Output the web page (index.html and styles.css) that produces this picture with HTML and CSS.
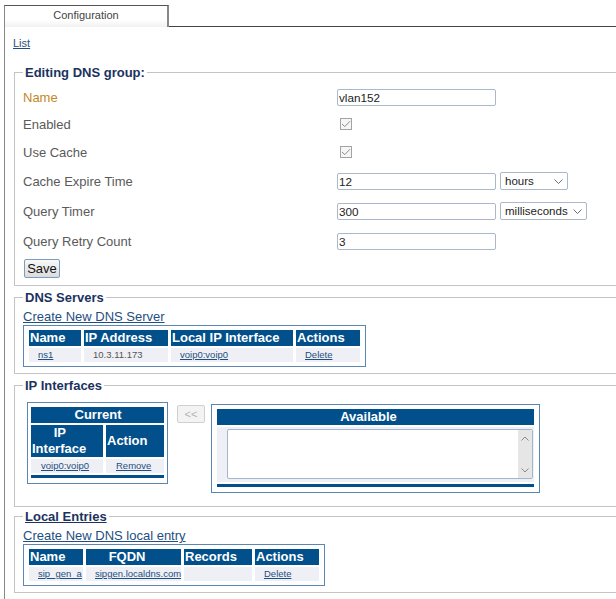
FILE: index.html
```html
<!DOCTYPE html>
<html lang="en">
  <head>
    <meta charset="UTF-8" />
    <meta name="viewport" content="width=device-width, initial-scale=1.0" />
    <title>DNS Group</title>
    <link rel="stylesheet" href="styles.css">
  </head>
  <body>
  <div class="tabs">
    <div class="tab">Configuration</div>
    <div class="tab-rest"></div>
  </div>
  <div class="panel">
    <a href="#" class="list-link">List</a>

    <fieldset class="group group-edit">
      <legend>Editing DNS group:</legend>
      <div class="row row-name">
        <label class="label required">Name</label>
        <input class="text" type="text" value="vlan152">
      </div>
      <div class="row row-check">
        <label class="label">Enabled</label>
        <span class="check"><svg width="10" height="8" viewBox="0 0 10 8"><polyline points="1,4 3.8,6.6 9,1.2" fill="none" stroke="#8c8c8c" stroke-width="1"/></svg></span>
      </div>
      <div class="row row-check">
        <label class="label">Use Cache</label>
        <span class="check"><svg width="10" height="8" viewBox="0 0 10 8"><polyline points="1,4 3.8,6.6 9,1.2" fill="none" stroke="#8c8c8c" stroke-width="1"/></svg></span>
      </div>
      <div class="row">
        <label class="label">Cache Expire Time</label>
        <input class="text" type="text" value="12">
        <span class="select">
          <select class="sel-hours"><option>hours</option></select>
          <svg class="chev" width="9" height="5" viewBox="0 0 9 5"><polyline points="0.5,0.5 4.5,4.5 8.5,0.5" fill="none" stroke="#6f6f6f" stroke-width="1"/></svg>
        </span>
      </div>
      <div class="row">
        <label class="label">Query Timer</label>
        <input class="text" type="text" value="300">
        <span class="select">
          <select class="sel-ms"><option>milliseconds</option></select>
          <svg class="chev" width="9" height="5" viewBox="0 0 9 5"><polyline points="0.5,0.5 4.5,4.5 8.5,0.5" fill="none" stroke="#6f6f6f" stroke-width="1"/></svg>
        </span>
      </div>
      <div class="row">
        <label class="label">Query Retry Count</label>
        <input class="text" type="text" value="3">
      </div>
      <button class="save">Save</button>
    </fieldset>

    <fieldset class="group group-servers">
      <legend>DNS Servers</legend>
      <a href="#" class="create">Create New DNS Server</a>
      <table class="grid servers">
        <colgroup>
          <col class="c52"><col class="c84"><col class="c122"><col class="c64">
        </colgroup>
        <tr>
          <th>Name</th>
          <th>IP Address</th>
          <th>Local IP Interface</th>
          <th>Actions</th>
        </tr>
        <tr>
          <td><a href="#">ns1</a></td>
          <td>10.3.11.173</td>
          <td><a href="#">voip0:voip0</a></td>
          <td><a href="#">Delete</a></td>
        </tr>
      </table>
    </fieldset>

    <fieldset class="group group-ifaces">
      <legend>IP Interfaces</legend>
      <div class="ifaces">
        <table class="grid current">
          <colgroup>
            <col class="c72"><col class="c58">
          </colgroup>
          <tr><th colspan="2" class="center">Current</th></tr>
          <tr>
            <th class="two-line">&nbsp;&nbsp;&nbsp;&nbsp;&nbsp;&nbsp;IP Interface</th>
            <th>Action</th>
          </tr>
          <tr>
            <td><a href="#">voip0:voip0</a></td>
            <td><a href="#">Remove</a></td>
          </tr>
          <tr class="bar"><td colspan="2"></td></tr>
        </table>
        <button class="move" disabled>&lt;&lt;</button>
        <table class="grid available">
          <tr><th class="center">Available</th></tr>
          <tr>
            <td class="list-cell">
              <div class="listbox">
                <div class="list-area"></div>
                <div class="scroll">
                  <svg width="8" height="5" viewBox="0 0 8 5"><polyline points="0.5,4.5 4,1 7.5,4.5" fill="none" stroke="#8a8a8a" stroke-width="1"/></svg>
                  <svg width="8" height="5" viewBox="0 0 8 5"><polyline points="0.5,0.5 4,4 7.5,0.5" fill="none" stroke="#8a8a8a" stroke-width="1"/></svg>
                </div>
              </div>
            </td>
          </tr>
          <tr class="bar"><td></td></tr>
        </table>
      </div>
    </fieldset>

    <fieldset class="group group-local">
      <legend><a href="#">Local Entries</a></legend>
      <a href="#" class="create">Create New DNS local entry</a>
      <table class="grid local">
        <colgroup>
          <col class="c54"><col class="c95"><col class="c68"><col class="c64">
        </colgroup>
        <tr>
          <th>Name</th>
          <th>&nbsp;&nbsp;&nbsp;&nbsp;&nbsp;&nbsp;FQDN</th>
          <th>Records</th>
          <th>Actions</th>
        </tr>
        <tr>
          <td><a href="#">sip_gen_a</a></td>
          <td><a href="#">sipgen.localdns.com</a></td>
          <td></td>
          <td><a href="#">Delete</a></td>
        </tr>
      </table>
    </fieldset>
  </div>
  </body>
</html>
```

FILE: styles.css
```css
html, body {
  overflow: hidden;
}
body {
  margin: 0;
  padding: 5px 0 0 4px;
  font-family: "Liberation Sans", Arial, sans-serif;
  color: #555;
  background: #fff;
}
a {
  color: #1f4f80;
}

/* tab strip */
.tabs {
  display: flex;
}
.tab {
  width: 162px;
  height: 21px;
  line-height: 19px;
  border-top: 1px solid #555;
  border-left: 1px solid #888;
  border-right: 2px solid #888;
  text-align: center;
  font-size: 11px;
  color: #444;
  background: linear-gradient(#fff 65%, #f1f1f1);
}
.tab-rest {
  flex: 1;
  height: 21px;
  border-bottom: 1px solid #444;
}
.panel {
  box-sizing: border-box;
  min-height: 572px;
  overflow-x: hidden;
  border-left: 1px solid #888;
  padding: 10px 0 0 8px;
}
.list-link {
  display: block;
  width: fit-content;
  font-size: 11px;
  line-height: 13px;
  margin-bottom: 15px;
}

/* fieldsets */
.group {
  width: 640px;
  margin: 4px 0 0 1px;
  padding: 4px 8px 7px;
  border: 1px solid #c4c4c4;
}
.group legend {
  padding: 0 2px;
  font-size: 13px;
  font-weight: bold;
  line-height: 15px;
  color: #1b3260;
}
.group legend a {
  color: #1b3260;
}
.group-servers {
  padding-bottom: 6px;
}
.group-ifaces {
  padding-bottom: 13px;
}
.group-local {
  margin-top: 2px;
  padding-bottom: 6px;
}

/* form rows */
.row {
  display: flex;
  align-items: center;
  height: 30px;
}
.row-name {
  height: 26px;
}
.row-check {
  height: 28px;
}
.label {
  width: 314px;
  font-size: 13px;
  color: #5a5a5a;
}
.required {
  color: #c4871f;
}
.text {
  box-sizing: border-box;
  width: 159px;
  height: 17px;
  margin: 0;
  padding: 0 1px;
  border: 1px solid #a9b8cb;
  border-radius: 2px;
  font-family: "Liberation Sans", Arial, sans-serif;
  font-size: 11.7px;
  color: #222;
}
.check {
  box-sizing: border-box;
  width: 12px;
  height: 12px;
  margin-left: 3px;
  border: 1px solid #a3a3a3;
  background: #f6f6f6;
  display: flex;
  align-items: center;
  justify-content: center;
}
.select {
  position: relative;
  display: inline-flex;
  margin-left: 4px;
}
.select select {
  -webkit-appearance: none;
  appearance: none;
  box-sizing: border-box;
  height: 18px;
  margin: 0;
  padding: 0 0 0 4px;
  border: 1px solid #a9b8cb;
  border-radius: 2px;
  background: #fff;
  font-family: "Liberation Sans", Arial, sans-serif;
  font-size: 11.5px;
  color: #222;
}
.sel-hours {
  width: 68px;
}
.sel-ms {
  width: 87px;
}
.chev {
  position: absolute;
  right: 5px;
  top: 7px;
}
.save {
  display: block;
  width: 36px;
  height: 19px;
  margin-top: 3px;
  margin-left: 1px;
  padding: 0;
  border: 1px solid #7b9cc2;
  border-radius: 2px;
  background: linear-gradient(#f8f8f8, #dcdcdc);
  font-family: "Liberation Sans", Arial, sans-serif;
  font-size: 13px;
  color: #111;
}

/* tables */
.create {
  display: block;
  width: fit-content;
  font-size: 13px;
  line-height: 15px;
}
.grid {
  box-sizing: border-box;
  table-layout: fixed;
  border: 1px solid #5b87b2;
  border-spacing: 3px 2px;
  padding: 2px;
  margin-top: 1px;
}
.grid th {
  background: #02508b;
  color: #fff;
  font-size: 13px;
  font-weight: bold;
  line-height: 16px;
  text-align: left;
  padding: 0 0 0 1px;
}
.grid th.center {
  text-align: center;
}
.grid td {
  background: #eef0f5;
  font-size: 9.5px;
  line-height: 12px;
  padding: 1px 0 1px 9px;
  color: #555;
  white-space: nowrap;
}
.grid tr.bar td {
  height: 3px;
  padding: 0;
  font-size: 0;
  line-height: 0;
  background: #02508b;
}
.servers {
  width: 343px;
}
.local {
  width: 302px;
}
.c52 { width: 52px; }
.c84 { width: 84px; }
.c122 { width: 122px; }
.c64 { width: 64px; }
.c54 { width: 54px; }
.c95 { width: 95px; }
.c68 { width: 68px; }
.c72 { width: 72px; }
.c58 { width: 58px; }

/* ip interfaces */
.ifaces {
  display: flex;
  align-items: flex-start;
  padding: 5px 0 0 4px;
}
.current {
  width: 141px;
  margin-top: 0;
  padding: 2px 0 3px;
}
.current td {
  padding-left: 10px;
}
.two-line {
  line-height: 16px;
}
.move {
  width: 28px;
  height: 18px;
  margin: 3px 6px 0 9px;
  padding: 0;
  border: 1px solid #cfcfcf;
  border-radius: 2px;
  background: #f3f3f3;
  color: #b3b3b3;
  font-family: "Liberation Sans", Arial, sans-serif;
  font-size: 11px;
}
.available {
  width: 329px;
  margin-top: 2px;
  border-spacing: 2px;
  padding: 2px 3px 3px;
}
.available th.center {
  padding-right: 15px;
}
.available td.list-cell {
  padding: 2px 1px 3px 10px;
}
.listbox {
  box-sizing: border-box;
  display: flex;
  width: 306px;
  height: 50px;
  border: 1px solid #a3b6cd;
  border-radius: 2px;
  background: #fff;
}
.list-area {
  flex: 1;
}
.scroll {
  width: 14px;
  background: #e6e6e6;
  display: flex;
  flex-direction: column;
  justify-content: space-between;
  align-items: center;
  padding: 6px 0 5px;
  box-sizing: border-box;
}
```
